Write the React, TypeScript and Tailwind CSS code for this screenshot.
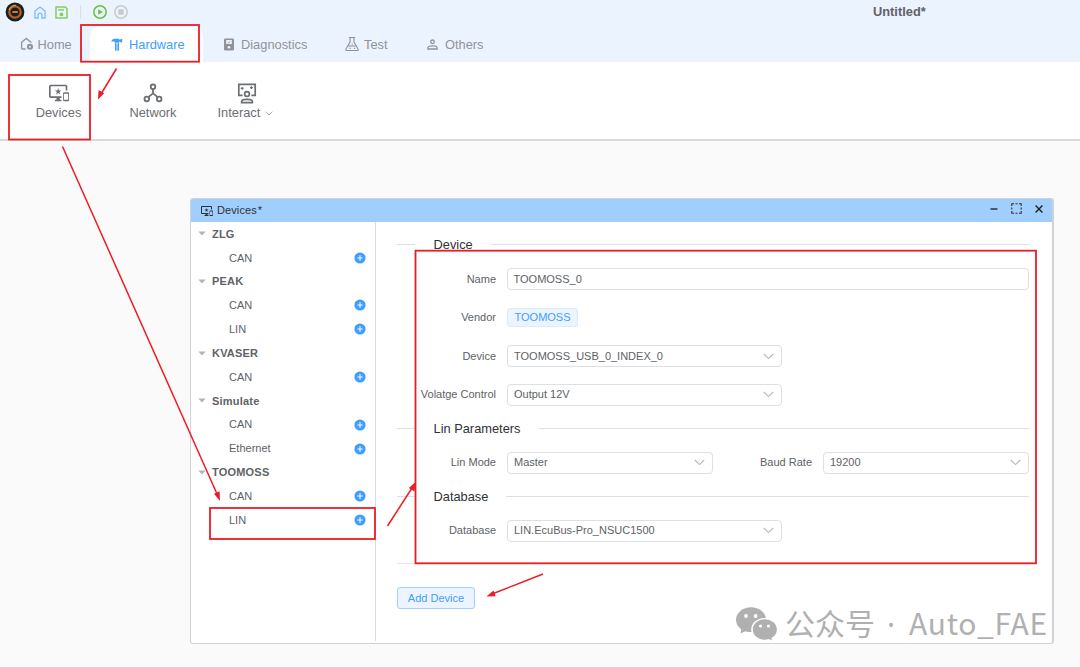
import type { ReactNode } from 'react';
import clsx from 'clsx';

interface IconProps {
  className?: string;
}

function DevicesIcon({ className }: IconProps) {
  return (
    <svg viewBox="0 0 24 24" fill="currentColor" className={className}>
      <path d="M23 11.01L18 11c-.55 0-1 .45-1 1v9c0 .55.45 1 1 1h5c.55 0 1-.45 1-1v-9c0-.55-.45-.99-1-.99zM23 20h-5v-7h5v7zM20 2H2C.89 2 0 2.89 0 4v12c0 1.1.89 2 2 2h7v2H7v2h8v-2h-2v-2h2v-2H2V4h18v5h2V4c0-1.11-.9-2-2-2zm-8.03 7L11 6l-.97 3H7l2.47 1.76-.94 2.91 2.47-1.8 2.47 1.8-.94-2.91L15 9h-3.03z" />
    </svg>
  );
}

function NetworkIcon({ className }: IconProps) {
  return (
    <svg viewBox="0 0 20 20" fill="none" stroke="currentColor" strokeWidth="1.8" className={className}>
      <circle cx="10" cy="3.8" r="2.3" />
      <circle cx="3.8" cy="16" r="2.3" />
      <circle cx="16.2" cy="16" r="2.3" />
      <path d="M10 6v4.8M10 10.4l-4.7 3.7M10 10.4l4.7 3.7" />
    </svg>
  );
}

function InteractIcon({ className }: IconProps) {
  return (
    <svg viewBox="0 0 20 21" fill="none" stroke="currentColor" strokeWidth="1.7" className={className}>
      <path d="M5.6 12.4H1.8V1.4h16.4v11h-3.8" />
      <circle cx="10" cy="11" r="2.4" />
      <path d="M4.6 19.6v-1c0-1.5 2.6-2.3 5.4-2.3s5.4.8 5.4 2.3v1z" />
      <path d="M3.8 5.4h2.8M5.2 4v2.8M13 4.6h2.8M14.4 3.2V6" strokeWidth="1.2" />
    </svg>
  );
}

function HomeGearIcon({ className }: IconProps) {
  return (
    <svg viewBox="0 0 14 14" fill="none" stroke="currentColor" strokeWidth="1.3" className={className}>
      <path d="M5.6 12H2.6c-.7 0-1-.4-1-1V5.2L6.3 1.4 11 5.2v.6" />
      <circle cx="10" cy="9.8" r="2" strokeWidth="2.1" />
    </svg>
  );
}

function HardwareIcon({ className }: IconProps) {
  return (
    <svg viewBox="0 0 12 13" fill="currentColor" className={className}>
      <path d="M.3 3.9C.7 1.8 2 .8 3.9.8h4.2v1L11.2.7v4L8.1 3.6v1.1H3.7V3.5C2.3 3.3 1.2 3.3.3 3.9z" />
      <path d="M4 5.4h4V12c0 .4-.3.7-.7.7H4.7c-.4 0-.7-.3-.7-.7z" fillOpacity="0.6" />
      <path d="M4 5h1v7.4H4zM7 5h1v7.4H7z" />
    </svg>
  );
}

function DiagnosticsIcon({ className }: IconProps) {
  return (
    <svg viewBox="0 0 12 13" className={className}>
      <rect x="1" y="0.5" width="10" height="12" rx="1.2" fill="currentColor" />
      <rect x="3.2" y="2" width="5.6" height="4" fill="#ebf3ff" />
      <circle cx="6" cy="9.3" r="1.3" fill="#ebf3ff" />
      <path d="M5.2 5.5l1.6-2" stroke="currentColor" />
    </svg>
  );
}

function FlaskIcon({ className }: IconProps) {
  return (
    <svg viewBox="0 0 15 16" fill="none" stroke="currentColor" strokeWidth="1.2" className={className}>
      <path d="M4 1h7M5.4 1v5L1 13.4V15h13v-1.6L9.6 6V1M3 10.2h9" />
      <path d="M5 12.6h1.2M9.5 12.6h1.2M7.2 8.4h1" strokeWidth="1.4" />
    </svg>
  );
}

function PersonIcon({ className }: IconProps) {
  return (
    <svg viewBox="0 0 11 11" fill="none" stroke="currentColor" strokeWidth="1.3" className={className}>
      <circle cx="5.5" cy="2.8" r="1.8" />
      <path d="M.9 10V8.6C.9 7.4 3 6.8 5.5 6.8s4.6.6 4.6 1.8V10z" />
    </svg>
  );
}

function ChevronIcon({ className }: IconProps) {
  return (
    <svg viewBox="0 0 11 7" fill="none" stroke="currentColor" strokeWidth="1.1" className={className}>
      <path d="M.8 1l4.7 4.6L10.2 1" />
    </svg>
  );
}

function PlusIcon() {
  return (
    <svg viewBox="0 0 12 12" className="h-[12px] w-[12px]">
      <circle cx="6" cy="6" r="5.6" fill="#409eff" />
      <path d="M6 3.3v5.4M3.3 6h5.4" stroke="#fff" strokeOpacity="0.9" strokeWidth="1.2" />
    </svg>
  );
}

function TitleBar() {
  return (
    <div className="flex h-[24px] items-center">
      <svg viewBox="0 0 20 20" className="ml-[5px] h-5 w-5">
        <circle cx="10" cy="10" r="9.4" fill="#17202a" />
        <circle cx="10" cy="10" r="5.7" fill="none" stroke="#b9611a" strokeWidth="2.2" />
        <path d="M4 8c1-3 4-5 7-4.6" fill="none" stroke="#f09a3c" strokeWidth="1.2" />
        <path d="M7.4 10h5.4" stroke="#e8892b" strokeWidth="1.8" />
      </svg>
      <svg viewBox="0 0 12 13" fill="none" stroke="#79bbff" strokeWidth="1.3" className="ml-[9px] h-[13px] w-[12px]">
        <path d="M1 12V5l5-4 5 4v7H8V9.2a2 2 0 0 0-4 0V12z" />
      </svg>
      <svg viewBox="0 0 13 13" fill="none" stroke="#85ce61" strokeWidth="1.5" className="ml-[9px] h-[13px] w-[13px]">
        <path d="M1 1h9.4L12 2.6V12H1z" />
        <path d="M3 3.9h6" />
        <circle cx="6.5" cy="8.4" r="1.2" fill="#85ce61" />
      </svg>
      <div className="ml-[12px] h-[14px] w-px bg-[#d9dfe8]" />
      <svg viewBox="0 0 14 14" className="ml-[12px] h-[14px] w-[14px]">
        <circle cx="7" cy="7" r="6.2" fill="none" stroke="#67c23a" strokeWidth="1.5" />
        <path d="M5.2 4.2v5.6L9.8 7z" fill="#67c23a" />
      </svg>
      <svg viewBox="0 0 14 14" className="ml-[7px] h-[14px] w-[14px]">
        <circle cx="7" cy="7" r="6.2" fill="none" stroke="#c8c9cc" strokeWidth="1.5" />
        <path d="M4.3 4.3h5.4v5.4H4.3z" fill="#c8c9cc" />
      </svg>
      <div className="ml-[745px] text-[12.83px] font-bold text-[#606266]">Untitled*</div>
    </div>
  );
}

function Tab({ icon, label, className }: { icon: ReactNode; label: string; className: string }) {
  return (
    <div className={clsx('flex h-full items-center text-[12.83px]', className)}>
      {icon}
      <span className="pt-px">{label}</span>
    </div>
  );
}

function Tabs() {
  return (
    <div className="flex h-[38px] pt-[2px] text-[#909399]">
      <Tab icon={<HomeGearIcon className="h-[14px] w-[14px]" />} label="Home" className="w-[90px] gap-[3.5px] pl-[20px]" />
      <Tab
        icon={<HardwareIcon className="h-[13px] w-[12px]" />}
        label="Hardware"
        className="w-[113px] gap-[6px] rounded-t-[10px] bg-white pl-[21px] text-[#409eff]"
      />
      <Tab icon={<DiagnosticsIcon className="h-[13px] w-[12px]" />} label="Diagnostics" className="w-[142px] gap-[6px] pl-[20px]" />
      <Tab icon={<FlaskIcon className="h-[16px] w-[14px]" />} label="Test" className="w-[82px] gap-[5px]" />
      <Tab icon={<PersonIcon className="h-[11px] w-[11px]" />} label="Others" className="gap-[7px]" />
    </div>
  );
}

function Ribbon() {
  return (
    <div className="flex h-[79px] border-b-2 border-[#d9d9dc] bg-white pt-[21px] text-[12.83px] leading-[20px] text-[#6b6e73]">
      <div className="ml-[22px] flex w-[73px] flex-col items-center">
        <DevicesIcon className="h-[20px] w-[20px]" />
        <span>Devices</span>
      </div>
      <div className="ml-[22px] flex w-[72px] flex-col items-center">
        <NetworkIcon className="h-[20px] w-[20px]" />
        <span>Network</span>
      </div>
      <div className="ml-[28.5px] flex flex-col">
        <InteractIcon className="ml-[19.5px] h-[21px] w-[20px]" />
        <span className="-mt-px flex items-center gap-[5px]">
          Interact
          <ChevronIcon className="h-[5px] w-[8px] text-[#909399]" />
        </span>
      </div>
    </div>
  );
}

const tree = [
  { name: 'ZLG', channels: ['CAN'] },
  { name: 'PEAK', channels: ['CAN', 'LIN'] },
  { name: 'KVASER', channels: ['CAN'] },
  { name: 'Simulate', channels: ['CAN', 'Ethernet'] },
  { name: 'TOOMOSS', channels: ['CAN', 'LIN'] },
];

function DeviceTree() {
  return (
    <div className="mb-[2px] w-[185px] shrink-0 border-r border-[#d9dbe0] text-[11px] text-[#606266]">
      {tree.map((vendor) => (
        <div key={vendor.name}>
          <div className="flex h-[23.85px] items-center pl-[7px] font-bold">
            <svg viewBox="0 0 8 5" className="mr-[6px] h-[5px] w-[8px]">
              <path d="M.4.5h7.2L4 4.6z" fill="#b1b3b8" />
            </svg>
            <span className="tracking-[0.2px]">{vendor.name}</span>
          </div>
          {vendor.channels.map((channel) => (
            <div key={channel} className="flex h-[23.85px] items-center justify-between pr-[9px] pl-[38px]">
              <span>{channel}</span>
              <PlusIcon />
            </div>
          ))}
        </div>
      ))}
    </div>
  );
}

function Divider({ title }: { title?: string }) {
  if (!title) return <div className="h-px bg-[#e4e7ed]" />;
  return (
    <div className="flex h-[20px] items-center">
      <div className="h-px w-[18px] bg-[#dcdfe6]" />
      <span className="pt-[2px] pr-[18px] pl-[18.5px] text-[12.83px] leading-[18px] text-[#303133]">{title}</span>
      <div className="h-px flex-1 bg-[#dcdfe6]" />
    </div>
  );
}

function Label({ children, className = 'w-[99px]' }: { children: string; className?: string }) {
  return <span className={clsx('mr-[11px] shrink-0 text-right whitespace-nowrap', className)}>{children}</span>;
}

function Select({ value, className }: { value: string; className: string }) {
  return (
    <div className={clsx('flex h-[22px] items-center justify-between rounded-[4px] border border-[#dcdfe6] pr-[7px] pl-[6px]', className)}>
      <span>{value}</span>
      <ChevronIcon className="h-[7px] w-[11px] text-[#b4b7bd]" />
    </div>
  );
}

function DeviceForm() {
  return (
    <div className="flex flex-1 flex-col pt-[12px] pr-[23px] pl-[21px] text-[11px] text-[#606266]">
      <Divider title="Device" />
      <div className="mt-[14px] flex h-[22px] items-center">
        <Label>Name</Label>
        <div className="flex h-[22px] flex-1 items-center rounded-[4px] border border-[#dcdfe6] px-[5.5px]">TOOMOSS_0</div>
      </div>
      <div className="mt-[16.5px] flex h-[22px] items-center">
        <Label>Vendor</Label>
        <span className="flex h-[19px] items-center rounded-[3px] border border-[#d9ecff] bg-[#ecf5ff] px-[6.5px] text-[#409eff]">
          TOOMOSS
        </span>
      </div>
      <div className="mt-[16.5px] flex h-[22px] items-center">
        <Label>Device</Label>
        <Select value="TOOMOSS_USB_0_INDEX_0" className="w-[275px]" />
      </div>
      <div className="mt-[16.5px] flex h-[22px] items-center">
        <Label>Volatge Control</Label>
        <Select value="Output 12V" className="w-[275px]" />
      </div>
      <div className="mt-[12.5px]">
        <Divider title="Lin Parameters" />
      </div>
      <div className="mt-[13.5px] flex h-[22px] items-center">
        <Label>Lin Mode</Label>
        <Select value="Master" className="w-[206px]" />
        <Label className="w-[99px]">Baud Rate</Label>
        <Select value="19200" className="w-[206px]" />
      </div>
      <div className="mt-[12.5px]">
        <Divider title="Database" />
      </div>
      <div className="mt-[13.5px] flex h-[22px] items-center">
        <Label>Database</Label>
        <Select value="LIN.EcuBus-Pro_NSUC1500" className="w-[275px]" />
      </div>
      <div className="mt-[21.5px]">
        <Divider />
      </div>
      <button className="mt-[22.5px] h-[22px] w-[78px] rounded-[3px] border border-[#a0cfff] bg-[#ecf5ff] pt-px text-[#409eff]">
        Add Device
      </button>
    </div>
  );
}

function DevicesWindow() {
  return (
    <div className="mt-[57px] ml-[190px] flex h-[446px] w-[864px] flex-col overflow-hidden rounded-[3px] border border-r-2 border-[#d0d2d6] bg-white">
      <div className="flex h-[23px] shrink-0 items-center bg-[#a0cfff] text-[11px] text-[#303133]">
        <DevicesIcon className="ml-[10px] h-[12px] w-[12px]" />
        <span className="ml-[4px] tracking-[0.1px]">Devices</span>
        <span className="ml-[1px]">*</span>
        <div className="ml-auto flex items-center gap-[12px] pr-[8px] pb-[4px]">
          <svg viewBox="0 0 10 10" className="h-[10px] w-[10px]">
            <path d="M1.5 5h7" stroke="#303133" strokeWidth="1.3" />
          </svg>
          <svg viewBox="0 0 11 11" className="h-[11px] w-[11px]">
            <path
              d="M.8 3V.8H3M8 .8h2.2V3M10.2 8v2.2H8M3 10.2H.8V8M4.4.8h2.2M4.4 10.2h2.2M.8 4.4v2.2M10.2 4.4v2.2"
              fill="none"
              stroke="#303133"
              strokeWidth="1.1"
            />
          </svg>
          <svg viewBox="0 0 10 10" className="h-[10px] w-[10px]">
            <path d="M1.6 1.6l6.8 6.8M8.4 1.6L1.6 8.4" stroke="#202124" strokeWidth="1.4" />
          </svg>
        </div>
      </div>
      <div className="flex min-h-0 flex-1">
        <DeviceTree />
        <DeviceForm />
      </div>
    </div>
  );
}

const arrows = [
  { line: 'M116.5 68.5L101 94', head: 'M98 99.5l.6-9.6 5.6 3.4z' },
  { line: 'M62.5 146.5L217.5 495', head: 'M220 501l-6-7.2 5.6-2.5z' },
  { line: 'M387.5 526L412 488', head: 'M415.5 482l-1 9.6-5.6-3.6z' },
  { line: 'M543 574L492 594', head: 'M486.5 596.5l7-6 2.2 5.8z' },
];

function Annotations() {
  return (
    <svg viewBox="0 0 1080 667" className="pointer-events-none absolute inset-0 h-[667px] w-[1080px]">
      <g fill="none" stroke="#ec1c24" strokeWidth="1.8">
        <rect x="81" y="25" width="118" height="36.7" />
        <rect x="9" y="75" width="81" height="64.5" />
        <rect x="210" y="508" width="165" height="31" />
        <rect x="415.5" y="250.7" width="620.5" height="312.6" />
        {arrows.map((arrow) => (
          <path key={arrow.line} d={arrow.line} strokeWidth="1.5" />
        ))}
      </g>
      {arrows.map((arrow) => (
        <path key={arrow.head} d={arrow.head} fill="#ec1c24" />
      ))}
    </svg>
  );
}

function Watermark() {
  return (
    <div className="absolute top-[597px] left-[736px] flex items-center font-['Noto_Sans_CJK_SC',sans-serif] text-[30px] leading-[44px] text-[#b0b0b0]">
      <svg viewBox="0 0 41 34" className="mt-[3px] mr-[8px] h-[34px] w-[41px]">
        <path d="M5.5 20l-1 6.5 6.5-3z" fill="currentColor" />
        <ellipse cx="15" cy="12.7" rx="15" ry="12.4" fill="currentColor" />
        <ellipse cx="28.5" cy="22.5" rx="13.3" ry="11.5" fill="#fff" />
        <path d="M31 31l5 2.6-1-5z" fill="currentColor" />
        <ellipse cx="28.8" cy="22.5" rx="12" ry="10.3" fill="currentColor" />
        <g fill="#fff">
          <circle cx="10" cy="9" r="1.9" />
          <circle cx="19.6" cy="9" r="1.9" />
          <circle cx="24.5" cy="19" r="1.6" />
          <circle cx="32.5" cy="19" r="1.6" />
        </g>
      </svg>
      <span className="whitespace-nowrap">公众号</span>
      <span className="w-[32px] pt-[6px] text-center font-['Noto_Sans',sans-serif]">·</span>
      <span className="ml-[2px] tracking-[0.7px] whitespace-nowrap">Auto_FAE</span>
    </div>
  );
}

export default function App() {
  return (
    <div className="relative h-[667px] w-[1080px] overflow-hidden bg-[#fafafa] font-['Liberation_Sans',Arial,sans-serif]">
      <div className="bg-[#ebf3ff]">
        <TitleBar />
        <Tabs />
      </div>
      <Ribbon />
      <DevicesWindow />
      <Watermark />
      <Annotations />
    </div>
  );
}
